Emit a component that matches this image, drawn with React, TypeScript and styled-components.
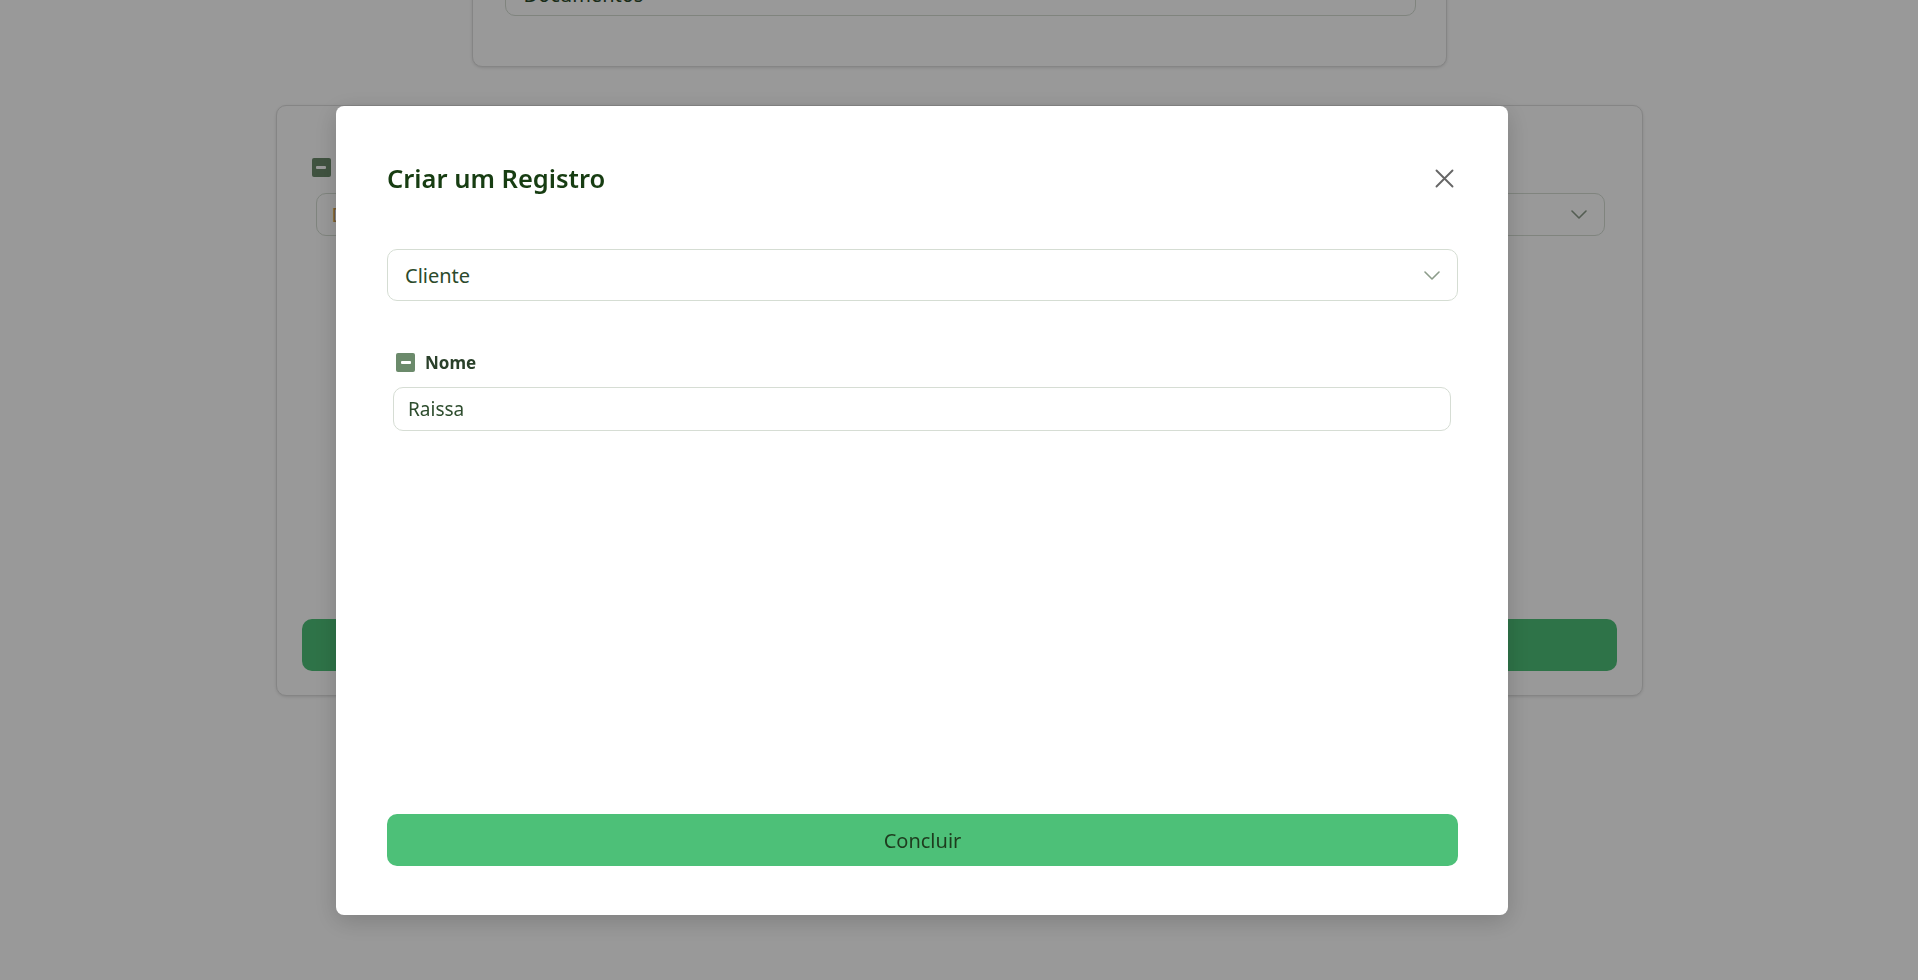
import styled, { createGlobalStyle } from "styled-components";

const GlobalStyle = createGlobalStyle`
  html, body {
    margin: 0;
    padding: 0;
    background: #ffffff;
    overflow: hidden;
    font-family: "Noto Sans", "Open Sans", sans-serif;
  }
  * {
    box-sizing: border-box;
  }
`;

const Page = styled.div`
  display: flex;
  flex-direction: column;
  align-items: center;
  gap: 38px;
  margin-top: -49px;
  height: 1029px;
`;

const TopCard = styled.div`
  width: 975px;
  padding: 20px 30px 50px 32px;
  border: 1px solid #dedede;
  border-radius: 10px;
  box-shadow: 0 1px 3px rgba(0, 0, 0, 0.12);
  background: #ffffff;
`;

const FormCard = styled.div`
  width: 1367px;
  height: 591px;
  display: flex;
  flex-direction: column;
  padding: 52px 25px 24px 25px;
  border: 1px solid #dedede;
  border-radius: 10px;
  box-shadow: 0 1px 3px rgba(0, 0, 0, 0.12);
  background: #ffffff;
`;

const SelectBox = styled.div<{ $h: number; $pad: number }>`
  display: flex;
  align-items: center;
  justify-content: space-between;
  height: ${(p) => p.$h}px;
  padding: 0 17px 0 ${(p) => p.$pad}px;
  border: 1.5px solid #d5ddd3;
  border-radius: 10px;
  background: #ffffff;
  font-size: 20px;
  color: #2b4a2b;
`;

const Placeholder = styled.span`
  color: #c99a52;
`;

const Field = styled.div<{ $inset: string }>`
  display: flex;
  flex-direction: column;
  padding: ${(p) => p.$inset};
`;

const LabelRow = styled.div<{ $shift: number }>`
  display: flex;
  align-items: center;
  gap: 10px;
  height: 19px;
  margin-left: ${(p) => p.$shift}px;
  font-size: 17px;
  font-weight: 700;
  color: #2a402a;
`;

const MinusBox = styled.span`
  display: inline-flex;
  align-items: center;
  justify-content: center;
  width: 19px;
  height: 19px;
  border-radius: 2px;
  background: #6b8a6b;

  &::after {
    content: "";
    width: 10px;
    height: 3px;
    border-radius: 1px;
    background: #ffffff;
  }
`;

const TextInput = styled.div`
  display: flex;
  align-items: center;
  height: 44px;
  margin-top: 15px;
  padding-left: 14px;
  border: 1.5px solid #d6ddd4;
  border-radius: 10px;
  font-size: 19px;
  color: #2e4d2e;
`;

const GreenButton = styled.div`
  display: flex;
  align-items: center;
  justify-content: center;
  height: 52px;
  margin-top: auto;
  border-radius: 10px;
  background: #4dc078;
  font-size: 20px;
  color: #1e3b1e;
`;

const Overlay = styled.div`
  position: fixed;
  inset: 0;
  display: flex;
  align-items: flex-start;
  padding: 106px 0 0 336px;
  background: rgba(0, 0, 0, 0.4);
`;

const Modal = styled.div`
  width: 1172px;
  height: 809px;
  display: flex;
  flex-direction: column;
  padding: 50px 50px 49px 51px;
  border-radius: 8px;
  background: #ffffff;
  box-shadow: 0 6px 24px rgba(0, 0, 0, 0.18);
`;

const ModalHeader = styled.div`
  display: flex;
  align-items: center;
  justify-content: space-between;
  height: 44px;
  margin-bottom: 49px;
`;

const Title = styled.h2`
  margin: 0;
  font-size: 25.5px;
  font-weight: 600;
  color: #173d12;
`;

const CloseButton = styled.button`
  display: flex;
  align-items: center;
  justify-content: center;
  width: 28px;
  height: 28px;
  padding: 0;
  border: none;
  background: transparent;
  cursor: pointer;
`;

const Chevron = () => (
  <svg width="16" height="9" viewBox="0 0 16 9" fill="none">
    <polyline
      points="1,1 8,8 15,1"
      stroke="#8c9c8a"
      strokeWidth="1.6"
      strokeLinecap="round"
      strokeLinejoin="round"
    />
  </svg>
);

const CloseIcon = () => (
  <svg width="19" height="19" viewBox="0 0 19 19" fill="none">
    <path d="M1.5 1.5 L17.5 17.5 M17.5 1.5 L1.5 17.5" stroke="#666666" strokeWidth="1.9" strokeLinecap="round" />
  </svg>
);

const App = () => {
  return (
    <>
      <GlobalStyle />
      <Page>
        <TopCard>
          <SelectBox $h={44} $pad={18}>
            <span>Documentos</span>
            <Chevron />
          </SelectBox>
        </TopCard>
        <FormCard>
          <Field $inset="0 12px 0 10px">
            <LabelRow $shift={0}>
              <MinusBox />
              <span>Tipo</span>
            </LabelRow>
            <SelectBox $h={43} $pad={15} style={{ marginTop: 16, marginLeft: 4 }}>
              <Placeholder>Documento</Placeholder>
              <Chevron />
            </SelectBox>
          </Field>
          <GreenButton>Salvar</GreenButton>
        </FormCard>
      </Page>

      <Overlay>
        <Modal>
          <ModalHeader>
            <Title>Criar um Registro</Title>
            <CloseButton aria-label="Fechar">
              <CloseIcon />
            </CloseButton>
          </ModalHeader>

          <SelectBox $h={52} $pad={17}>
            <span>Cliente</span>
            <Chevron />
          </SelectBox>

          <Field $inset="52px 7px 0 6px">
            <LabelRow $shift={3}>
              <MinusBox />
              <span>Nome</span>
            </LabelRow>
            <TextInput>Raissa</TextInput>
          </Field>

          <GreenButton>Concluir</GreenButton>
        </Modal>
      </Overlay>
    </>
  );
};

export default App;
